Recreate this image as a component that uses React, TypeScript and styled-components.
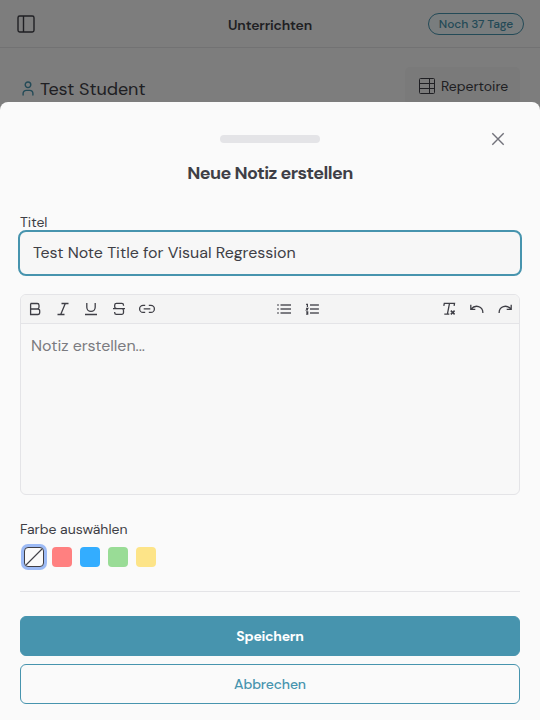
import React from "react";
import styled, { createGlobalStyle } from "styled-components";

const GlobalStyle = createGlobalStyle`
  *, *::before, *::after { box-sizing: border-box; }
  html, body { margin: 0; height: 100%; overflow: hidden; }
  body {
    background: #fafafa;
    color: #3f3f46;
    font-family: "DM Sans", "Inter", "Liberation Sans", sans-serif;
    font-size: 14px;
  }
  button, input { font: inherit; color: inherit; }
  button { cursor: pointer; }
  svg { display: block; flex: none; }
`;

const Page = styled.div`
  position: relative;
  height: 720px;
  width: 100%;
`;

const TopBar = styled.header`
  display: grid;
  grid-template-columns: 1fr auto 1fr;
  align-items: center;
  height: 48px;
  padding: 0 16px;
  border-bottom: 1px solid #e4e4e7;
`;

const TopTitle = styled.h1`
  margin: 3px 0 0;
  font-size: 14px;
  line-height: 20px;
  font-weight: 600;
  letter-spacing: -0.18px;
`;

const TrialBadge = styled.span`
  justify-self: end;
  height: 22px;
  width: 96px;
  text-align: center;
  border: 1px solid #4794ae;
  border-radius: 11px;
  background: #f3fafc;
  color: #4794ae;
  font-size: 12px;
  font-weight: 500;
  line-height: 20px;
  letter-spacing: -0.08px;
  white-space: nowrap;
`;

const StudentRow = styled.div`
  display: flex;
  justify-content: space-between;
  align-items: flex-start;
  padding: 19px 20px 0;
`;

const StudentName = styled.div`
  display: flex;
  align-items: center;
  gap: 4px;
  height: 44px;
  font-size: 18px;
  letter-spacing: -0.04px;
`;

const RepertoireButton = styled.button`
  display: flex;
  align-items: center;
  gap: 5px;
  width: 115px;
  height: 38px;
  padding: 0 0 0 14px;
  border: 0;
  border-radius: 5px;
  background: #f4f4f4;
  font-size: 14px;
  letter-spacing: -0.04px;
`;

const Overlay = styled.div`
  position: absolute;
  inset: 0;
  display: flex;
  flex-direction: column;
  justify-content: flex-end;
  background: rgba(0, 0, 0, 0.5);
`;

const Sheet = styled.section`
  display: flex;
  flex-direction: column;
  height: 618px;
  padding: 26px 20px 16px;
  border-radius: 8px 8px 0 0;
  background: #fafafa;
`;

const SheetTop = styled.div`
  display: grid;
  grid-template-columns: 1fr 100px 1fr;
  align-items: center;
  height: 22px;
`;

const Handle = styled.div`
  grid-column: 2;
  height: 8px;
  border-radius: 4px;
  background: #e4e4e7;
`;

const CloseButton = styled.button`
  justify-self: end;
  padding: 0;
  margin-right: 12px;
  border: 0;
  background: none;
  color: #71717a;
`;

const SheetTitle = styled.h2`
  margin: 11px 0 0;
  font-size: 18px;
  line-height: 24px;
  font-weight: 700;
  letter-spacing: -0.57px;
  text-align: center;
`;

const Label = styled.label<{ $top: number }>`
  margin-top: ${(p) => p.$top}px;
  font-size: 14px;
  line-height: 20px;
  letter-spacing: -0.03px;
`;

const TitleInput = styled.input`
  width: 504px;
  height: 46px;
  margin: -2px -2px 0;
  padding: 0 13px 1px;
  border: 2px solid #4794ae;
  border-radius: 8px;
  outline: none;
  background: #f7f7f7;
  font-size: 16px;
  letter-spacing: -0.03px;
`;

const Editor = styled.div`
  display: flex;
  flex-direction: column;
  height: 201px;
  margin-top: 18px;
  overflow: hidden;
  border: 1px solid #e4e4e7;
  border-radius: 6px;
  background: #f8f8f8;
`;

const Toolbar = styled.div`
  display: flex;
  justify-content: space-between;
  height: 29px;
  border-bottom: 1px solid #e4e4e7;
  background: #f4f4f4;
`;

const ToolGroup = styled.div`
  display: flex;
`;

const ToolButton = styled.button`
  display: grid;
  place-items: center;
  width: 28px;
  height: 28px;
  padding: 0;
  border: 0;
  background: none;
`;

const Placeholder = styled.div`
  padding: 12px 10px;
  color: #7b7b80;
  font-size: 16px;
  line-height: 20px;
  letter-spacing: -0.04px;
`;

const Swatches = styled.div`
  display: flex;
  gap: 8px;
  margin-top: 8px;
  padding-left: 4px;
`;

const Swatch = styled.button<{ $color: string; $selected?: boolean }>`
  width: 20px;
  height: 20px;
  padding: 0;
  border: ${(p) => (p.$selected ? "1px solid #3f3f46" : "0")};
  border-radius: 4px;
  background: ${(p) => p.$color};
  box-shadow: ${(p) => (p.$selected ? "0 0 0 3px #9cbaf5" : "none")};
`;

const Divider = styled.hr`
  width: 100%;
  height: 1px;
  margin: 24px 0;
  border: 0;
  background: #e4e4e7;
`;

const Actions = styled.div`
  display: flex;
  flex-direction: column;
  gap: 8px;
`;

const ActionButton = styled.button<{ $primary?: boolean }>`
  height: 40px;
  padding: 0 0 1px;
  border: 1px solid #4794ae;
  border-radius: 6px;
  background: ${(p) => (p.$primary ? "#4794ae" : "#fafafa")};
  color: ${(p) => (p.$primary ? "#fff" : "#4794ae")};
  font-size: 14px;
  font-weight: ${(p) => (p.$primary ? 700 : 500)};
  letter-spacing: ${(p) => (p.$primary ? "-0.28px" : "-0.15px")};
`;

const Glyph = ({ children }: { children: React.ReactNode }) => (
  <svg width="18" height="18" viewBox="0 0 18 18" fill="none" stroke="currentColor" strokeWidth="1.3">
    {children}
  </svg>
);

const formatTools = [
  { name: "Fett", icon: <path d="M4.6 3.5H11.2a1.8 1.8 0 0 1 1.8 1.8v1.9A1.8 1.8 0 0 1 11.2 9H4.6V3.5M4.6 9v5.5H11.8a1.9 1.9 0 0 0 1.9-1.9v-1.7A1.9 1.9 0 0 0 11.8 9M4.6 14.5V9" /> },
  { name: "Kursiv", icon: <path d="M7.5 3.5h7M3.5 14.5h7M11.3 3.5l-4.6 11" /> },
  { name: "Unterstrichen", icon: <path d="M4.8 3v4.2a4.2 4.2 0 0 0 8.4 0V3M3 14.5h12" /> },
  {
    name: "Durchgestrichen",
    icon: <path d="M13.5 5.8V5a1.7 1.7 0 0 0-1.7-1.7H6.5A1.8 1.8 0 0 0 4.7 5v1.6A1.8 1.8 0 0 0 6.5 8.5M3 8.6h12M11.7 8.7a1.8 1.8 0 0 1 1.8 1.8v2.1a1.8 1.8 0 0 1-1.8 1.8H6.4a1.7 1.7 0 0 1-1.7-1.7V12" />,
  },
  {
    name: "Link",
    icon: <path d="M7.2 5.4H5.1a3.5 3.5 0 0 0 0 7h2.1M10.8 5.4h2.1a3.5 3.5 0 0 1 0 7h-2.1M5.7 8.9h6.6" />,
  },
];

const listTools = [
  {
    name: "Aufzählung",
    icon: (
      <g stroke="#7c7c81" strokeWidth="1.8">
        <path d="M2 5h2M2 9h2M2 13h2" strokeOpacity=".75" />
        <path d="M5.5 5h10.5M5.5 9h10.5M5.5 13h10.5" />
      </g>
    ),
  },
  {
    name: "Nummerierung",
    icon: (
      <>
        <path d="M7 5H15.9M7 9H15.9M7 13H15.9" stroke="#7c7c81" strokeWidth="1.8" />
        <path d="M3.1 4.3h1.3V7M3.1 8.3h1.7L3.4 10h1.6M3.1 11.8h1.6v2.3H3.1M3.6 13h1.2" strokeWidth="1.2" />
      </>
    ),
  },
];

const historyTools = [
  {
    name: "Formatierung entfernen",
    icon: (
      <>
        <path d="M3.8 5.8l.5-2.4h10.2l-.4 2.4M9.5 3.4L7.4 14.2M4.3 14.2h5" />
        <path d="M10.8 10.6l3.8 3.8M14.6 10.6l-3.8 3.8" strokeWidth="1.5" />
      </>
    ),
  },
  { name: "Rückgängig", icon: <path d="M2.8 4.8v4.5h4.5M3 9.1c2.2-2.5 5-3.3 7.6-2.5 2.7.8 4.3 2.9 4.3 6.3" /> },
  { name: "Wiederholen", icon: <path d="M15.2 4.8v4.5h-4.5M15 9.1c-2.2-2.5-5-3.3-7.6-2.5-2.7.8-4.3 2.9-4.3 6.3" /> },
];

const colors = ["#ff8080", "#33adff", "#99dc96", "#fde488"];

const Tools = ({ items }: { items: { name: string; icon: React.ReactNode }[] }) => (
  <ToolGroup>
    {items.map((t) => (
      <ToolButton key={t.name} aria-label={t.name}>
        <Glyph>{t.icon}</Glyph>
      </ToolButton>
    ))}
  </ToolGroup>
);

export default function App() {
  return (
    <>
      <GlobalStyle />
      <Page>
        <TopBar>
          <svg width="20" height="20" viewBox="0 0 20 20" fill="none" stroke="currentColor" strokeWidth="1.4">
            <rect x="2" y="2" width="16" height="16" rx="1.7" />
            <path d="M7.5 2v16" />
          </svg>
          <TopTitle>Unterrichten</TopTitle>
          <TrialBadge>Noch 37 Tage</TrialBadge>
        </TopBar>
        <StudentRow>
          <StudentName>
            <svg width="16" height="16" viewBox="0 0 16 16" fill="none" stroke="#4794ae" strokeWidth="1.4" strokeLinecap="round">
              <circle cx="8" cy="3.8" r="2.8" />
              <path d="M3.1 14v-1.4a3.2 3.2 0 0 1 3.2-3.2h3.4a3.2 3.2 0 0 1 3.2 3.2V14" />
            </svg>
            Test Student
          </StudentName>
          <RepertoireButton>
            <svg width="17" height="17" viewBox="0 0 17 17" fill="none" stroke="currentColor">
              <rect x=".5" y=".5" width="15" height="15" rx="1" />
              <path d="M.5 5.5h15M.5 10.5h15M10.5.5v15" />
            </svg>
            Repertoire
          </RepertoireButton>
        </StudentRow>
        <Overlay>
          <Sheet role="dialog" aria-modal="true">
            <SheetTop>
              <Handle />
              <CloseButton aria-label="Schließen">
                <svg width="20" height="20" viewBox="0 0 20 20" fill="none" stroke="currentColor" strokeWidth="1.4">
                  <path d="M4.3 4.3l11.4 11.4M15.7 4.3L4.3 15.7" />
                </svg>
              </CloseButton>
            </SheetTop>
            <SheetTitle>Neue Notiz erstellen</SheetTitle>
            <Label $top={27} htmlFor="note-title">Titel</Label>
            <TitleInput id="note-title" defaultValue="Test Note Title for Visual Regression" />
            <Editor>
              <Toolbar>
                <Tools items={formatTools} />
                <Tools items={listTools} />
                <Tools items={historyTools} />
              </Toolbar>
              <Placeholder>Notiz erstellen...</Placeholder>
            </Editor>
            <Label as="div" $top={24}>Farbe auswählen</Label>
            <Swatches>
              <Swatch $color="#fafafa" $selected aria-label="Keine Farbe">
                <svg width="18" height="18" viewBox="0 0 18 18" stroke="#3f3f46" strokeWidth="1.1">
                  <path d="M1 17L17 1" />
                </svg>
              </Swatch>
              {colors.map((c) => (
                <Swatch key={c} $color={c} aria-label={c} />
              ))}
            </Swatches>
            <Divider />
            <Actions>
              <ActionButton $primary>Speichern</ActionButton>
              <ActionButton>Abbrechen</ActionButton>
            </Actions>
          </Sheet>
        </Overlay>
      </Page>
    </>
  );
}
